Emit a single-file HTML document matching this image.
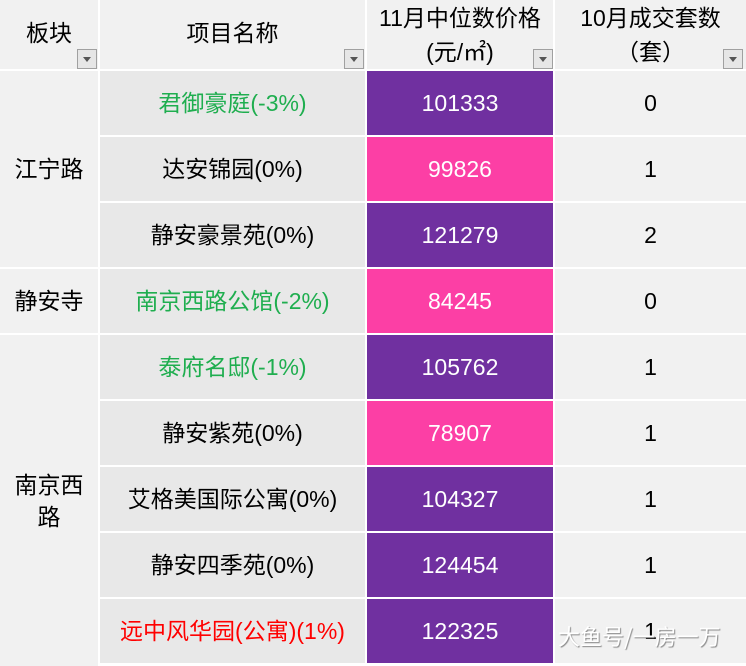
<!DOCTYPE html>
<html><head><meta charset="utf-8"><style>
body{margin:0;width:746px;height:666px;background:#fff;font-family:"Liberation Sans","Noto Sans CJK SC",sans-serif;position:relative;overflow:hidden}
.c{position:absolute;display:flex;align-items:center;justify-content:center;text-align:center;font-size:23px;color:#000;background:#f1f1f1;box-sizing:border-box;line-height:32px}
.n{background:#e8e8e8}
.p{background:#7030a0;color:#fff}
.k{background:#fc3fa5;color:#fff}
.g{color:#1fae4f}
.r{color:#f00}
.dd{position:absolute;width:20px;height:20px;background:#e6e6e6;border:1px solid #a0a0a0;box-sizing:border-box}
.dd:after{content:"";position:absolute;left:5px;top:7px;border-left:4px solid transparent;border-right:4px solid transparent;border-top:5px solid #555}
.wm{position:absolute;left:558px;top:620px;font-size:22px;color:#fff;text-shadow:1px 1px 1px #888;font-family:"Noto Sans CJK SC",sans-serif}
</style></head><body>
<div class="c" style="left:0;top:0;width:98px;height:69px;padding-bottom:4px">板块</div>
<div class="c" style="left:100px;top:0;width:265px;height:69px;padding-bottom:4px">项目名称</div>
<div class="c" style="left:367px;top:0;width:186px;height:69px;line-height:34px">11月中位数价格<br>(元/㎡)</div>
<div class="c" style="left:555px;top:0;width:191px;height:69px;line-height:34px">10月成交套数<br>（套）</div>
<div class="dd" style="left:77px;top:49px"></div>
<div class="dd" style="left:344px;top:49px"></div>
<div class="dd" style="left:533px;top:49px"></div>
<div class="dd" style="left:723px;top:49px"></div>

<div class="c" style="left:0;top:71px;width:98px;height:196px">江宁路</div>
<div class="c" style="left:0;top:269px;width:98px;height:64px">静安寺</div>
<div class="c" style="left:0;top:335px;width:98px;height:331px;line-height:32px">南京西<br>路</div>

<div class="c n g" style="left:100px;top:71px;width:265px;height:64px">君御豪庭(-3%)</div>
<div class="c p" style="left:367px;top:71px;width:186px;height:64px">101333</div>
<div class="c" style="left:555px;top:71px;width:191px;height:64px">0</div>

<div class="c n" style="left:100px;top:137px;width:265px;height:64px">达安锦园(0%)</div>
<div class="c k" style="left:367px;top:137px;width:186px;height:64px">99826</div>
<div class="c" style="left:555px;top:137px;width:191px;height:64px">1</div>

<div class="c n" style="left:100px;top:203px;width:265px;height:64px">静安豪景苑(0%)</div>
<div class="c p" style="left:367px;top:203px;width:186px;height:64px">121279</div>
<div class="c" style="left:555px;top:203px;width:191px;height:64px">2</div>

<div class="c n g" style="left:100px;top:269px;width:265px;height:64px">南京西路公馆(-2%)</div>
<div class="c k" style="left:367px;top:269px;width:186px;height:64px">84245</div>
<div class="c" style="left:555px;top:269px;width:191px;height:64px">0</div>

<div class="c n g" style="left:100px;top:335px;width:265px;height:64px">泰府名邸(-1%)</div>
<div class="c p" style="left:367px;top:335px;width:186px;height:64px">105762</div>
<div class="c" style="left:555px;top:335px;width:191px;height:64px">1</div>

<div class="c n" style="left:100px;top:401px;width:265px;height:64px">静安紫苑(0%)</div>
<div class="c k" style="left:367px;top:401px;width:186px;height:64px">78907</div>
<div class="c" style="left:555px;top:401px;width:191px;height:64px">1</div>

<div class="c n" style="left:100px;top:467px;width:265px;height:64px">艾格美国际公寓(0%)</div>
<div class="c p" style="left:367px;top:467px;width:186px;height:64px">104327</div>
<div class="c" style="left:555px;top:467px;width:191px;height:64px">1</div>

<div class="c n" style="left:100px;top:533px;width:265px;height:64px">静安四季苑(0%)</div>
<div class="c p" style="left:367px;top:533px;width:186px;height:64px">124454</div>
<div class="c" style="left:555px;top:533px;width:191px;height:64px">1</div>

<div class="c n r" style="left:100px;top:599px;width:265px;height:64px">远中风华园(公寓)(1%)</div>
<div class="c p" style="left:367px;top:599px;width:186px;height:64px">122325</div>
<div class="c" style="left:555px;top:599px;width:191px;height:64px">1</div>
<div class="wm">大鱼号/一房一万</div>
</body></html>
